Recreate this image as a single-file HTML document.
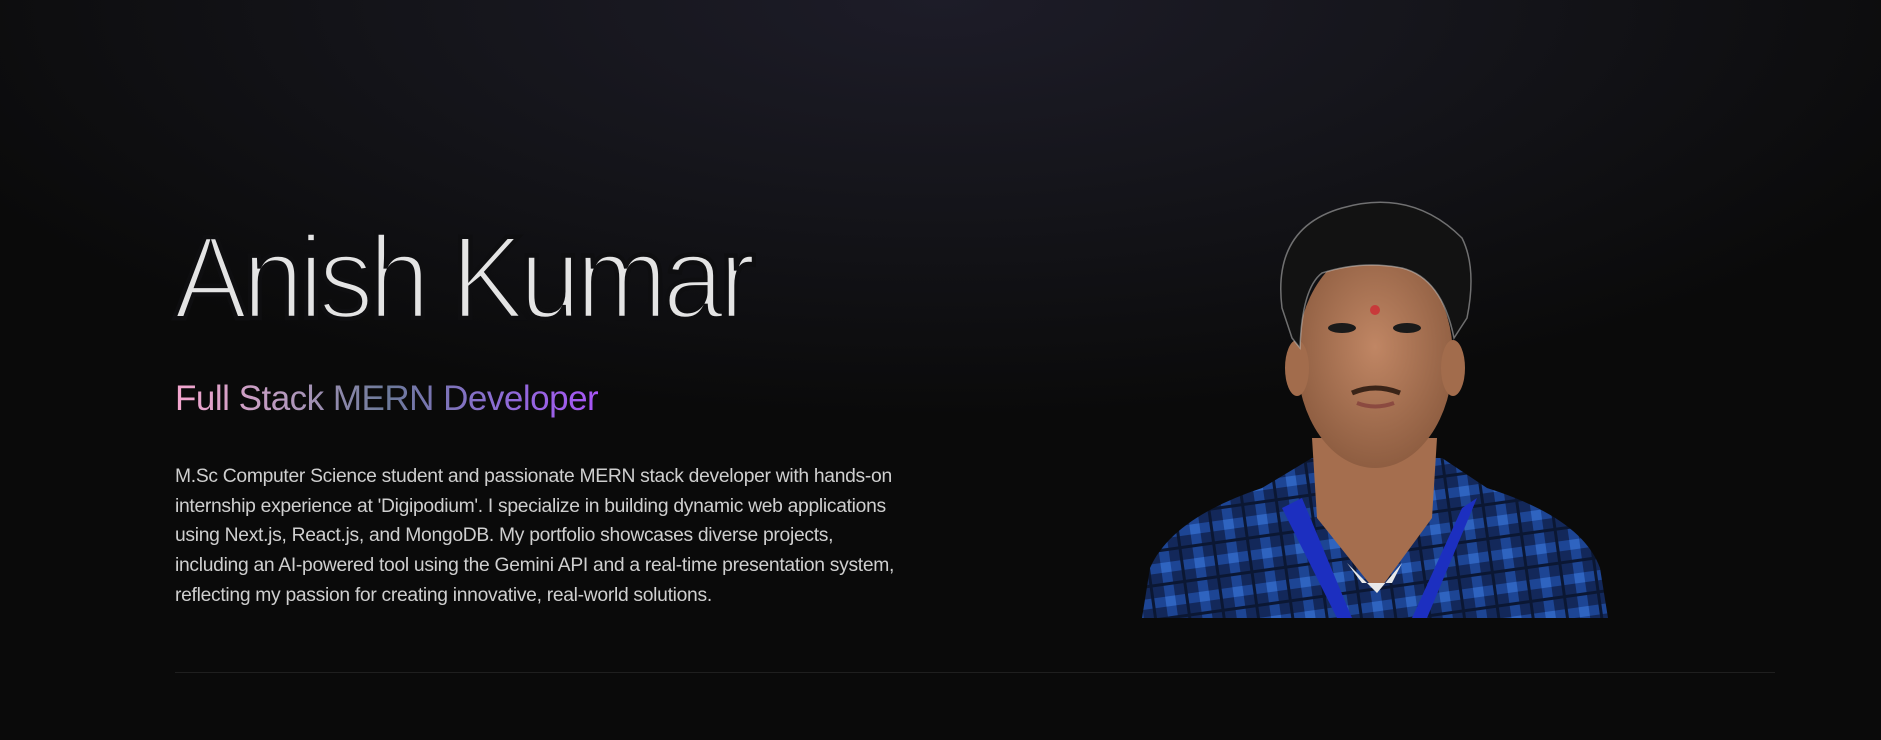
<!DOCTYPE html>
<html><head><meta charset="utf-8">
<style>
html,body{margin:0;padding:0}
body{width:1881px;height:740px;overflow:hidden;background:#0a0a0a;position:relative;font-family:"Liberation Sans",sans-serif}
.glow{position:absolute;left:0;top:0;width:1881px;height:740px;background:radial-gradient(ellipse 1100px 420px at 50% 0%, #1d1c28 0%, #15151b 45%, rgba(10,10,10,0) 100%)}
h1{position:absolute;left:174px;top:208px;margin:0;font-weight:400;font-size:118px;color:#e4e4e4;letter-spacing:-5px;line-height:140px;-webkit-text-stroke:4.5px #0e0e10;transform:scaleX(0.93);transform-origin:0 0;white-space:nowrap}
.sub{position:absolute;left:175px;top:378px;font-size:35px;letter-spacing:-0.5px;background:linear-gradient(90deg,#f5a6cf 0%,#b99bbf 25%,#6c7a9a 50%,#8a6ed0 75%,#a855f7 100%);-webkit-background-clip:text;background-clip:text;color:transparent;line-height:42px}
p{position:absolute;left:175px;top:462px;margin:0;width:735px;font-size:19.3px;line-height:29.7px;color:#cfcfcf;letter-spacing:-0.3px}
.hr{position:absolute;left:175px;top:672px;width:1600px;height:1px;background:#1f1f1f}
svg.p{position:absolute;left:1142px;top:188px}
</style></head><body>
<div class="glow"></div>
<h1>Anish Kumar</h1>
<div class="sub">Full Stack MERN Developer</div>
<p>M.Sc Computer Science student and passionate MERN stack developer with hands-on internship experience at 'Digipodium'. I specialize in building dynamic web applications using Next.js, React.js, and MongoDB. My portfolio showcases diverse projects, including an AI-powered tool using the Gemini API and a real-time presentation system, reflecting my passion for creating innovative, real-world solutions.</p>
<div class="hr"></div>
<svg class="p" width="470" height="430" viewBox="0 0 470 430">
<defs>
<pattern id="pl" width="34" height="34" patternUnits="userSpaceOnUse" patternTransform="rotate(-8)">
<rect width="34" height="34" fill="#13285a"/>
<rect x="0" y="0" width="34" height="10" fill="#1d4594"/>
<rect x="0" y="0" width="10" height="34" fill="#1d4594"/>
<rect x="0" y="0" width="10" height="10" fill="#2f64c0"/>
<rect x="20" y="0" width="3" height="34" fill="#0b1733"/>
<rect x="0" y="20" width="34" height="3" fill="#0b1733"/>
</pattern>
<radialGradient id="sk" cx="50%" cy="45%" r="60%"><stop offset="0" stop-color="#c08664"/><stop offset="1" stop-color="#8a5a3e"/></radialGradient>
</defs>
<path d="M0 430 L8 380 Q30 330 120 300 L170 270 L300 270 L345 300 Q440 330 458 380 L466 430 Z" fill="url(#pl)"/>
<path d="M170 250 L175 330 L235 405 L290 330 L295 250 Z" fill="#a56e4e"/>
<path d="M205 375 L235 405 L260 375 L250 395 L220 395 Z" fill="#e8e8e8"/>
<path d="M140 320 L195 430 L210 430 L160 310 Z" fill="#1c2fc0"/>
<path d="M320 320 L270 430 L285 430 L335 310 Z" fill="#1c2fc0"/>
<ellipse cx="233" cy="170" rx="78" ry="110" fill="url(#sk)"/>
<ellipse cx="155" cy="180" rx="12" ry="28" fill="#a26c4c"/>
<ellipse cx="311" cy="180" rx="12" ry="28" fill="#a26c4c"/>
<path d="M140 120 Q130 40 200 20 Q270 0 320 50 Q335 80 325 130 L312 150 Q300 90 260 80 Q220 72 180 85 Q160 100 158 160 L150 150 Z" fill="#121212" stroke="#cfcfcf" stroke-width="1.5" stroke-opacity="0.5"/>
<ellipse cx="200" cy="140" rx="14" ry="5" fill="#1a1a1a"/>
<ellipse cx="265" cy="140" rx="14" ry="5" fill="#1a1a1a"/>
<circle cx="233" cy="122" r="5" fill="#c83a3a"/>
<path d="M210 205 Q233 195 258 205" stroke="#3a2418" stroke-width="5" fill="none"/>
<path d="M215 215 Q233 222 252 215" stroke="#8b4a40" stroke-width="4" fill="none"/>
</svg>
</body></html>
